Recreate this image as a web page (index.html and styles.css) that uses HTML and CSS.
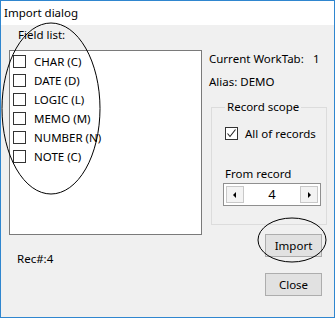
FILE: index.html
```html
<!DOCTYPE html>
<html>
<head>
<meta charset="utf-8">
<link rel="stylesheet" href="styles.css">
</head>
<body>
<div class="window">
  <div class="titlebar">Import dialog</div>
  <div class="client">
    <div class="left">
      <div class="field-label">Field list:</div>
      <div class="listbox">
        <div class="item"><span class="cb"></span><span>CHAR (C)</span></div>
        <div class="item"><span class="cb"></span><span>DATE (D)</span></div>
        <div class="item"><span class="cb"></span><span>LOGIC (L)</span></div>
        <div class="item"><span class="cb"></span><span>MEMO (M)</span></div>
        <div class="item"><span class="cb"></span><span>NUMBER (N)</span></div>
        <div class="item"><span class="cb"></span><span>NOTE (C)</span></div>
      </div>
      <div class="rec">Rec#:4</div>
    </div>
    <div class="right">
      <div class="info"><span class="info-label">Current WorkTab:</span><span>1</span></div>
      <div class="alias">Alias: DEMO</div>
      <fieldset class="scope">
        <legend class="scope-legend">Record scope</legend>
        <div class="check-row">
          <span class="cb checked"><svg width="11" height="11" viewBox="0 0 11 11"><polyline points="1.5,5.5 4,8.5 9.5,1.5" fill="none" stroke="#222" stroke-width="1.1"/></svg></span>
          <span>All of records</span>
        </div>
        <div class="from-label">From record</div>
        <div class="spinner">
          <span class="spin-btn"><svg width="4" height="6" viewBox="0 0 4 6"><polygon points="3,0 0,3 3,6" fill="#000"/></svg></span>
          <span class="spin-value">4</span>
          <span class="spin-btn"><svg width="4" height="6" viewBox="0 0 4 6"><polygon points="1,0 4,3 1,6" fill="#000"/></svg></span>
        </div>
      </fieldset>
      <div class="btn btn-import">Import</div>
      <div class="btn btn-close">Close</div>
    </div>
  </div>
  <svg class="annot" width="335" height="318" viewBox="0 0 335 318">
    <ellipse cx="51" cy="108.5" rx="49" ry="85.5" fill="none" stroke="#000" stroke-width="1"/>
    <ellipse cx="292" cy="240" rx="34" ry="22" fill="none" stroke="#000" stroke-width="1"/>
  </svg>
</div>
</body>
</html>
```

FILE: styles.css
```css
html, body {
  margin: 0;
  padding: 0;
  background: #f0f0f0;
}

body {
  font-family: "Noto Sans", "Open Sans", sans-serif;
  font-size: 11.5px;
  color: #000;
}

.window {
  position: relative;
  width: 335px;
  height: 318px;
  box-sizing: border-box;
  border: 1px solid #2f86cf;
  background: #f0f0f0;
  display: flex;
  flex-direction: column;
}

.titlebar {
  height: 24px;
  line-height: 24px;
  background: #fff;
  padding-left: 3px;
  flex: none;
}

.client {
  flex: 1;
  display: flex;
}

.left {
  width: 201px;
  padding-left: 8px;
  box-sizing: border-box;
  flex: none;
}

.field-label {
  margin: 2px 0 0 9px;
  line-height: 16px;
  height: 16px;
}

.listbox {
  margin-top: 7px;
  width: 193px;
  height: 185px;
  box-sizing: border-box;
  border: 1px solid #7a7a7a;
  background: #fff;
  padding: 1px 0 0 3px;
}

.item {
  height: 19px;
  display: flex;
  align-items: center;
  gap: 8px;
}

.cb {
  width: 13px;
  height: 13px;
  box-sizing: border-box;
  border: 1px solid #333;
  background: #fff;
  flex: none;
  display: flex;
  align-items: center;
  justify-content: center;
}

.rec {
  margin: 16px 0 0 8px;
  line-height: 16px;
}

.right {
  flex: 1;
  display: flex;
  flex-direction: column;
}

.info {
  margin: 26px 0 0 7px;
  line-height: 16px;
  display: flex;
}

.info-label {
  width: 104px;
}

.alias {
  margin: 7px 0 0 7px;
  line-height: 16px;
}

.scope {
  margin: 9px 0 0 9px;
  width: 116px;
  box-sizing: border-box;
  border: 1px solid #dcdcdc;
  padding: 0 0 18px 0;
  min-width: 0;
}

.scope-legend {
  margin-left: 13px;
  padding: 0 2px;
  line-height: 16px;
}

.check-row {
  margin: 10px 0 0 13px;
  height: 16px;
  display: flex;
  align-items: center;
  gap: 7px;
}

.from-label {
  margin: 25px 0 0 13px;
  line-height: 16px;
}

.spinner {
  margin: 1px 0 0 11px;
  width: 98px;
  height: 23px;
  box-sizing: border-box;
  border: 1px solid #8f8f8f;
  background: #fff;
  padding: 2px;
  display: flex;
  align-items: stretch;
}

.spin-btn {
  width: 18px;
  box-sizing: border-box;
  border: 1px solid #c8c8c8;
  background: #f3f3f3;
  display: flex;
  align-items: center;
  justify-content: center;
}

.spin-value {
  flex: 1;
  text-align: center;
  line-height: 17px;
  font-size: 13px;
}

.btn {
  width: 57px;
  height: 23px;
  box-sizing: border-box;
  border: 1px solid #adadad;
  background: #e1e1e1;
  text-align: center;
  line-height: 21px;
  margin-left: 63px;
}

.btn-import {
  margin-top: 9px;
}

.btn-close {
  margin-top: 16px;
}

.annot {
  position: absolute;
  left: -1px;
  top: -1px;
  pointer-events: none;
}
```
